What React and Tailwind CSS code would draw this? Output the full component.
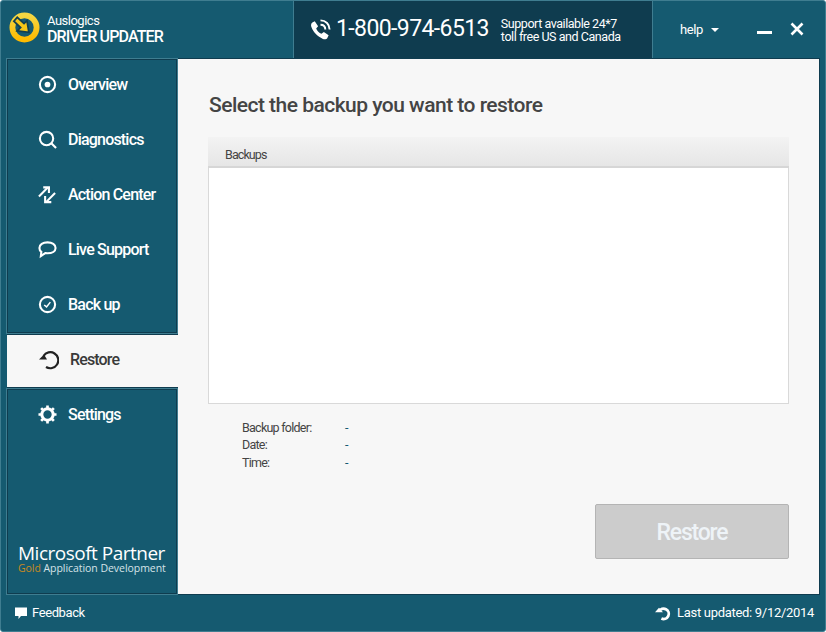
import React from 'react'

const font = { fontFamily: 'Roboto, "Liberation Sans", sans-serif' }

function Icon({ name, className = 'w-5 h-5' }) {
  const p = { fill: 'none', stroke: 'currentColor', strokeWidth: 2.2 }
  return (
    <svg viewBox="0 0 20 20" className={className}>
      {name === 'overview' && (
        <>
          <circle cx="10" cy="10" r="8" {...p} />
          <circle cx="10" cy="10" r="3" fill="currentColor" />
        </>
      )}
      {name === 'search' && (
        <>
          <circle cx="9" cy="9" r="7" {...p} />
          <path d="M14 14l5 5" {...p} />
        </>
      )}
      {name === 'action' && (
        <>
          <path d="M1 12l9-9" {...p} />
          <path d="M5.500 2.500h6v6" {...p} />
          <path d="M18 8.500l-9 9" {...p} />
          <path d="M14 18H7.500v-6.500" {...p} />
        </>
      )}
      {name === 'chat' && (
        <path d="M10 2.500c5 0 8.500 2.500 8.500 5.800s-3.500 5.700-8.500 5.700c-.9 0-1.700 0-2.400-.2L3 17l.5-4.500C2 11.500 1.500 10 1.500 8.300 1.500 5 5 2.500 10 2.500z" {...p} />
      )}
      {name === 'check' && (
        <>
          <circle cx="10" cy="10" r="8" {...p} />
          <path d="M6.500 10.500l2.500 2 4-5" fill="none" stroke="currentColor" strokeWidth="1.600" />
        </>
      )}
      {name === 'restore' && (
        <>
          <path d="M4.500 6A8 8 0 1 1 7 17" {...p} />
          <path d="M0 9.500h8L5 4.500z" fill="currentColor" />
        </>
      )}
      {name === 'gear' && (
        <>
          <circle cx="10" cy="10" r="6" fill="none" stroke="currentColor" strokeWidth="3.200" />
          <path d="M10 .5v3M10 16.500v3M.5 10h3M16.500 10h3M3.300 3.300l2 2M14.700 14.700l2 2M16.700 3.300l-2 2M5.300 14.700l-2 2" fill="none" stroke="currentColor" strokeWidth="2.800" />
        </>
      )}
    </svg>
  )
}

function NavItem({ icon, label }) {
  return (
    <div className="h-[55px] flex items-center pl-[31px] pb-[4px] text-white">
      <Icon name={icon} className="w-[19px] h-[19px]" />
      <span className="ml-[11px] text-[16px] font-medium tracking-[-0.8px]">{label}</span>
    </div>
  )
}

function Logo() {
  return (
    <svg viewBox="0 0 32 32" className="w-[31px] h-[31px]">
      <defs>
        <linearGradient id="lg" x1="0" y1="0" x2="0" y2="1">
          <stop offset="0" stopColor="#f5d743" />
          <stop offset="1" stopColor="#ffbb00" />
        </linearGradient>
      </defs>
      <circle cx="16" cy="16" r="12.500" fill="none" stroke="url(#lg)" strokeWidth="6" />
      <path d="M5 9.500L8.500 5.500 15.500 12l3-3 2 12-12-1.500 3.500-3.500z" fill="#f5c518" stroke="#123f50" strokeWidth="1.800" strokeLinejoin="miter" />
    </svg>
  )
}

export default function App() {
  return (
    <div style={font} className="w-[826px] h-[632px] bg-[#155a70] border border-[#3f7d90] rounded-[3px] flex flex-col overflow-hidden">
      <header className="h-[57px] flex shrink-0 text-white">
        <div className="w-[292px] flex items-start pl-[8px] pt-[11px]">
          <Logo />
          <div className="ml-[7px] mt-[1px]">
            <div className="text-[13px] leading-[15px] tracking-[-0.5px]">Auslogics</div>
            <div className="text-[16px] leading-[18px] font-medium tracking-[-0.85px]">DRIVER UPDATER</div>
          </div>
        </div>
        <div className="w-[360px] bg-[#0f3c4f] border-x border-[#3f7d90] flex items-center pl-[15px]">
          <svg viewBox="0 0 24 24" className="w-[23px] h-[23px]">
            <path d="M6 3.500l3.500 5-2 2.500c1 2.500 3 4.500 5.500 5.500l2.500-2 5 3.500-1.500 3c-.8 1.200-2.500 1.500-4.500.8C9 19.500 4.500 15 2.500 9.500c-.7-2-.3-3.700 1-4.700z" fill="#fff" />
            <path d="M12 7c3 0 5 2 5 5M12 2.500c5.500 0 9.500 4 9.500 9.500" fill="none" stroke="#fff" strokeWidth="2" />
          </svg>
          <span className="ml-[4px] text-[23px] tracking-[-0.6px]">1-800-974-6513</span>
          <div className="ml-[12px] text-[12.500px] leading-[13px] tracking-[-0.45px]">
            <div>Support available 24*7</div>
            <div>toll free US and Canada</div>
          </div>
        </div>
        <div className="flex-1 flex items-start pt-[21px] pl-[27px]">
          <span className="text-[13px] leading-[16px] tracking-[-0.4px]">help</span>
          <span className="ml-[8px] mt-[6px] w-0 h-0 border-x-[4px] border-x-transparent border-t-[4px] border-t-white" />
          <span className="ml-[38px] mt-[9px] w-[15px] h-[3px] bg-white" />
          <svg viewBox="0 0 14 14" className="ml-[18px] w-[14px] h-[14px]">
            <path d="M1.500 1.500l11 11M12.500 1.500l-11 11" stroke="#fff" strokeWidth="2.600" />
          </svg>
        </div>
      </header>

      <div className="flex-1 flex pl-[5px] pr-[5px] min-h-0">
        <aside className="w-[172px] flex flex-col shrink-0">
          <div className="h-[276px] border border-[#3f7d90] outline outline-[#0f3c4f] -outline-offset-2">
            <NavItem icon="overview" label="Overview" />
            <NavItem icon="search" label="Diagnostics" />
            <NavItem icon="action" label="Action Center" />
            <NavItem icon="chat" label="Live Support" />
            <NavItem icon="check" label="Back up" />
          </div>
          <div className="h-[54px] ml-[1px] bg-[#f7f7f7] flex items-center pl-[32px] pb-[2px] text-[#222] border-y border-[#0f3c4f]">
            <Icon name="restore" className="w-[20px] h-[20px]" />
            <span className="ml-[11px] text-[16px] font-medium tracking-[-0.85px] text-[#3a3a3a]">Restore</span>
          </div>
          <div className="flex-1 border border-[#3f7d90] outline outline-[#0f3c4f] -outline-offset-2 flex flex-col justify-between">
            <NavItem icon="gear" label="Settings" />
            <div className="pl-[11px] pb-[19px] text-white" style={{ fontFamily: '"Open Sans", sans-serif' }}>
              <div className="text-[19px] leading-[20px] -mb-[1px] font-medium tracking-[-0.5px]">Microsoft Partner</div>
              <div className="text-[10.500px] leading-[13px] tracking-[-0.05px] text-[#d5e3e8]">
                <span className="text-[#c98a1e]">Gold</span> Application Development
              </div>
            </div>
          </div>
        </aside>

        <main className="flex-1 bg-[#f7f7f7] border border-l-0 border-[#0f3c4f] pl-[31px] pr-[30px] pt-[33px] flex flex-col">
          <h1 className="text-[21px] leading-[26px] font-medium tracking-[-0.52px] text-[#444]">Select the backup you want to restore</h1>
          <div className="mt-[19px] w-[581px] -ml-px h-[267px] flex flex-col">
            <div className="h-[31px] bg-gradient-to-b from-[#f3f3f3] to-[#e6e6e6] border-b-2 border-[#d6d6d6] pl-[17px] pt-[7px] flex items-center text-[12.500px] tracking-[-0.9px] text-[#444]">
              Backups
            </div>
            <div className="flex-1 bg-white border border-t-0 border-[#d9d9d9]" />
          </div>
          <div className="mt-[15px] ml-[33px] text-[12.500px] leading-[17.250px] tracking-[-0.75px] text-[#444]">
            <div className="flex"><span className="w-[103px]">Backup folder:</span><span className="text-[#155a70]">-</span></div>
            <div className="flex"><span className="w-[103px]">Date:</span><span className="text-[#155a70]">-</span></div>
            <div className="flex"><span className="w-[103px]">Time:</span><span className="text-[#155a70]">-</span></div>
          </div>
          <div className="mt-[33px] flex justify-end">
            <button className="w-[194px] h-[55px] bg-[#cccccc] border border-[#b4b4b4] rounded-[2px] pt-[3px] text-[23px] font-medium tracking-[-1.2px] text-[#eef3f7]">
              Restore
            </button>
          </div>
        </main>
      </div>

      <footer className="h-[36px] shrink-0 flex items-center justify-between pl-[14px] pr-[11px] text-white text-[13px] tracking-[-0.4px]">
        <div className="flex items-center">
          <svg viewBox="0 0 12 12" className="w-[12px] h-[12px]">
            <path d="M0 0.500h12v8.500H6L3.500 12V9H0z" fill="#fff" />
          </svg>
          <span className="ml-[5px]">Feedback</span>
        </div>
        <div className="flex items-center">
          <svg viewBox="0 0 20 20" className="w-[16px] h-[16px]">
            <path d="M5 8a6.500 6.500 0 1 1 3 9" fill="none" stroke="#fff" strokeWidth="3.500" />
            <path d="M0 9h10L5 3.500z" fill="#fff" />
          </svg>
          <span className="ml-[6px] tracking-[-0.3px]">Last updated: 9/12/2014</span>
        </div>
      </footer>
    </div>
  )
}
